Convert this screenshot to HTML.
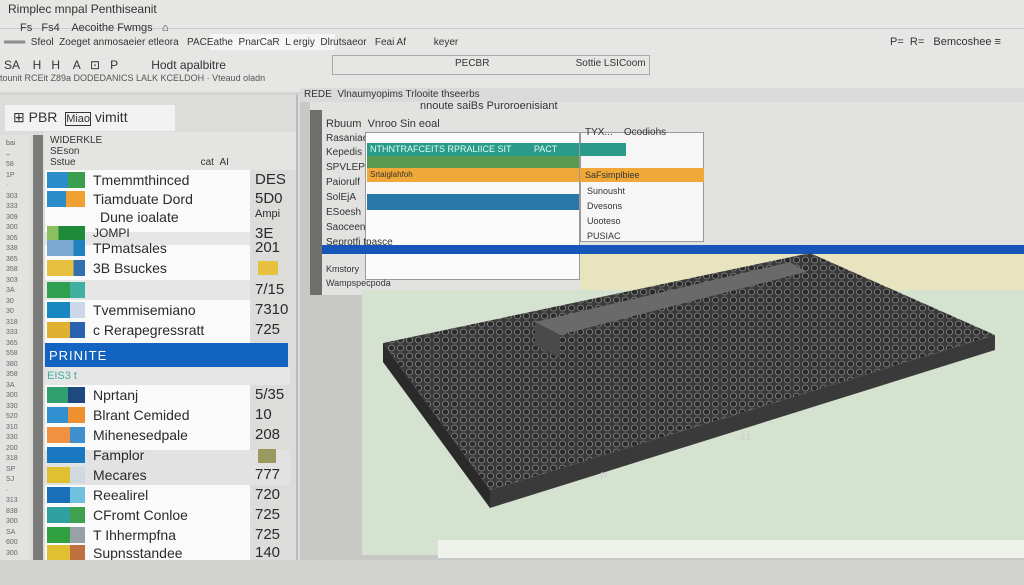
<!DOCTYPE html>
<html style="width:1024px;height:585px;overflow:hidden"><head><meta charset="utf-8"><style>
*{margin:0;padding:0;box-sizing:border-box}
body{width:1024px;height:585px;overflow:hidden;background:#d4d4d2;font-family:"Liberation Sans",sans-serif;position:relative;color:#333}
.a{position:absolute;white-space:nowrap}
.row{position:absolute;left:45px;width:245px;height:20px;font-size:14px;color:#2a2a2a}
.row .ic{position:absolute;left:2px;top:2px;width:38px;height:16px;background:linear-gradient(90deg,#2a8cc8 0 50%,#f0a030 50%)}
.row .t{position:absolute;left:48px;top:2px}
.row .v{position:absolute;left:210px;top:1px;font-size:15px}
</style></head><body>
<div class="a" style="left:0;top:0;width:1024px;height:92px;background:#e6e6e4"></div>
<div class="a" style="left:0;top:28px;width:1024px;height:1px;background:#ccc"></div>
<div class="a" style="left:8px;top:2px;font-size:12px">Rimplec mnpal Penthiseanit</div>
<div class="a" style="left:20px;top:22px;font-size:11px">Fs &nbsp; Fs4 &nbsp;&nbsp; Aecoithe Fwmgs &nbsp; ⌂</div>
<div class="a" style="left:210px;top:34px;width:125px;height:16px;background:#f5f5f5"></div>
<div class="a" style="left:4px;top:37px;font-size:10px">═══ &nbsp;Sfeol &nbsp;Zoeget anmosaeier etleora &nbsp; PACEathe &nbsp;PnarCaR &nbsp;L ergiy &nbsp;Dlrutsaeor &nbsp; Feai Af &nbsp;&nbsp;&nbsp;&nbsp;&nbsp;&nbsp;&nbsp;&nbsp; keyer</div>
<div class="a" style="left:4px;top:58px;font-size:12px">SA &nbsp;&nbsp; H &nbsp; H &nbsp;&nbsp; A &nbsp; ⊡ &nbsp; P &nbsp;&nbsp;&nbsp;&nbsp;&nbsp;&nbsp;&nbsp;&nbsp; Hodt apalbitre</div>
<div class="a" style="left:0;top:73px;font-size:9px;color:#555">tounit RCEit Z89a DODEDANICS LALK KCELDOH · Vteaud oladn</div>
<div class="a" style="left:332px;top:55px;width:318px;height:20px;border:1px solid #aaa"></div>
<div class="a" style="left:455px;top:58px;font-size:10px">PECBR &nbsp;&nbsp;&nbsp;&nbsp;&nbsp;&nbsp;&nbsp;&nbsp;&nbsp;&nbsp;&nbsp;&nbsp;&nbsp;&nbsp;&nbsp;&nbsp;&nbsp;&nbsp;&nbsp;&nbsp;&nbsp;&nbsp;&nbsp;&nbsp;&nbsp;&nbsp;&nbsp;&nbsp;&nbsp; Sottie LSICoom</div>
<div class="a" style="left:890px;top:36px;font-size:11px">P= &nbsp;R= &nbsp;&nbsp;Bemcoshee ≡</div>
<div class="a" style="left:0;top:95px;width:300px;height:465px;background:#dcdcda"></div>
<div class="a" style="left:5px;top:105px;width:170px;height:26px;background:#f2f2f2;font-size:14px;padding:4px 8px">⊞ PBR &nbsp;<span style="border:1px solid #333;font-size:11px">Miao</span> vimitt</div>
<div class="a" style="left:0;top:135px;width:30px;height:425px;overflow:hidden;background:#e2e2e0;font-size:7px;line-height:10.5px;color:#666;padding:4px 6px">bai<br>–<br>58<br>1P<br>·<br>303<br>333<br>309<br>300<br>305<br>338<br>365<br>358<br>303<br>3A<br>30<br>30<br>318<br>333<br>365<br>558<br>380<br>358<br>3A<br>300<br>330<br>520<br>310<br>330<br>200<br>318<br>SP<br>SJ<br>·<br>313<br>838<br>300<br>SA<br>600<br>300</div>
<div class="a" style="left:33px;top:135px;width:10px;height:425px;background:#7a7a78"></div>
<div class="a" style="left:44px;top:132px;width:252px;height:38px;background:#e4e4e2;font-size:10px;padding:3px 6px">WIDERKLE<br>SEson<br>Sstue &nbsp;&nbsp;&nbsp;&nbsp;&nbsp;&nbsp;&nbsp;&nbsp;&nbsp;&nbsp;&nbsp;&nbsp;&nbsp;&nbsp;&nbsp;&nbsp;&nbsp;&nbsp;&nbsp;&nbsp;&nbsp;&nbsp;&nbsp;&nbsp;&nbsp;&nbsp;&nbsp;&nbsp;&nbsp;&nbsp;&nbsp;&nbsp;&nbsp;&nbsp;&nbsp;&nbsp;&nbsp;&nbsp;&nbsp;&nbsp;&nbsp;&nbsp;&nbsp; cat &nbsp;AI</div>
<div class="a" style="left:45px;top:170px;width:205px;height:390px;background:#fafafa"></div>
<div class="a" style="left:45px;top:232px;width:205px;height:13px;background:#e6e6e6"></div>
<div class="a" style="left:45px;top:280px;width:205px;height:20px;background:#e6e6e6"></div>
<div class="a" style="left:45px;top:367px;width:245px;height:18px;background:#e6e6e6"></div>
<div class="a" style="left:45px;top:450px;width:245px;height:35px;background:#e2e2e2"></div>
<div class="row" style="top:170px"><div class="ic" style="background:linear-gradient(90deg,#2a8cc8 0 55%,#3aa050 55%)"></div><div class="t">Tmemmthinced</div><div class="v">DES</div></div>
<div class="row" style="top:189px"><div class="ic"></div><div class="t">Tiamduate Dord</div><div class="v">5D0</div></div>
<div class="row" style="top:207px"><div class="t" style="left:55px">Dune ioalate</div><div class="v" style="font-size:11px">Ampi</div></div>
<div class="row" style="top:224px"><div class="ic" style="background:linear-gradient(90deg,#8bc060 0 30%,#1e8a3a 30%)"></div><div class="t" style="font-size:12px">JOMPI</div><div class="v">3E</div></div>
<div class="row" style="top:238px"><div class="ic" style="background:linear-gradient(90deg,#7aa8d0 0 70%,#2080c0 70%)"></div><div class="t">TPmatsales</div><div class="v">201</div></div>
<div class="row" style="top:258px"><div class="ic" style="background:linear-gradient(90deg,#e8c040 0 70%,#3070b0 70%)"></div><div class="t">3B Bsuckes</div><div class="v" style="background:#e8c040;width:20px;height:14px;top:3px;left:213px"></div></div>
<div class="row" style="top:280px"><div class="ic" style="background:linear-gradient(90deg,#30a050 0 60%,#40b0a0 60%)"></div><div class="v">7/15</div></div>
<div class="row" style="top:300px"><div class="ic" style="background:linear-gradient(90deg,#1a88c0 0 60%,#ccd8e8 60%)"></div><div class="t">Tvemmisemiano</div><div class="v">7310</div></div>
<div class="row" style="top:320px"><div class="ic" style="background:linear-gradient(90deg,#e0b030 0 60%,#2a60b0 60%)"></div><div class="t">c Rerapegressratt</div><div class="v">725</div></div>
<div class="a" style="left:45px;top:343px;width:243px;height:24px;background:#1264c0;color:#fff;font-size:13px;padding:5px 4px;letter-spacing:1px">PRINITE</div>
<div class="a" style="left:47px;top:370px;font-size:11px;color:#4a9">EIS3 t</div>
<div class="row" style="top:385px"><div class="ic" style="background:linear-gradient(90deg,#30a070 0 55%,#204880 55%)"></div><div class="t">Nprtanj</div><div class="v">5/35</div></div>
<div class="row" style="top:405px"><div class="ic" style="background:linear-gradient(90deg,#3090d0 0 55%,#f09030 55%)"></div><div class="t">Blrant Cemided</div><div class="v">10</div></div>
<div class="row" style="top:425px"><div class="ic" style="background:linear-gradient(90deg,#f09040 0 60%,#4090d0 60%)"></div><div class="t">Mihenesedpale</div><div class="v">208</div></div>
<div class="row" style="top:445px"><div class="ic" style="background:#1a78c0"></div><div class="t">Famplor</div><div class="v" style="background:#9a9a60;width:18px;height:14px;top:4px;left:213px"></div></div>
<div class="row" style="top:465px"><div class="ic" style="background:linear-gradient(90deg,#e0c030 0 60%,#d0d8e0 60%)"></div><div class="t">Mecares</div><div class="v">777</div></div>
<div class="row" style="top:485px"><div class="ic" style="background:linear-gradient(90deg,#1a70b8 0 60%,#70c0e0 60%)"></div><div class="t">Reealirel</div><div class="v">720</div></div>
<div class="row" style="top:505px"><div class="ic" style="background:linear-gradient(90deg,#30a0a0 0 60%,#40a050 60%)"></div><div class="t">CFromt Conloe</div><div class="v">725</div></div>
<div class="row" style="top:525px"><div class="ic" style="background:linear-gradient(90deg,#30a040 0 60%,#9aa0a8 60%)"></div><div class="t">T Ihhermpfna</div><div class="v">725</div></div>
<div class="row" style="top:543px"><div class="ic" style="background:linear-gradient(90deg,#e0c030 0 60%,#c07040 60%)"></div><div class="t">Supnsstandee</div><div class="v">140</div></div>
<div class="a" style="left:296px;top:95px;width:2px;height:465px;background:#bbb"></div>
<div class="a" style="left:300px;top:88px;width:724px;height:472px;background:#c8c8c6"></div>
<div class="a" style="left:300px;top:88px;width:724px;height:14px;background:#dadada;font-size:10px;padding:1px 4px">REDE &nbsp;Vlnaumyopims Trlooite thseerbs</div>
<div class="a" style="left:310px;top:102px;width:714px;height:193px;background:#e2e2e0"></div>
<div class="a" style="left:310px;top:110px;width:12px;height:185px;background:#6e6e6c"></div>
<div class="a" style="left:420px;top:100px;font-size:11px">nnoute saiBs Puroroenisiant</div>
<div class="a" style="left:326px;top:118px;font-size:11px">Rbuum &nbsp;Vnroo Sin eoal</div>
<div class="a" style="left:326px;top:133px;font-size:10px">Rasaniaes</div>
<div class="a" style="left:365px;top:132px;width:215px;height:148px;background:#fbfbfb;border:1px solid #999"></div>
<div class="a" style="left:580px;top:132px;width:124px;height:110px;background:#f6f6f6;border:1px solid #999"></div>
<div class="a" style="left:585px;top:127px;font-size:10px">TYX... &nbsp;&nbsp; Ocodiohs</div>
<div class="a" style="left:367px;top:143px;width:212px;height:13px;background:#2a9a8a;color:#e0fff0;font-size:9px;padding:1px 3px">NTHNTRAFCEITS RPRALIICE SIT &nbsp;&nbsp;&nbsp;&nbsp;&nbsp;&nbsp;&nbsp; PACT</div>
<div class="a" style="left:580px;top:143px;width:46px;height:13px;background:#2a9a8a"></div>
<div class="a" style="left:367px;top:156px;width:212px;height:12px;background:#5a9a50"></div>
<div class="a" style="left:367px;top:168px;width:212px;height:14px;background:#f0a838;font-size:8px;padding:2px 3px">Srtaiglahfoh</div>
<div class="a" style="left:580px;top:168px;width:124px;height:14px;background:#f0a838;font-size:9px;padding:2px 5px">SaFsimplbiee</div>
<div class="a" style="left:367px;top:182px;width:212px;height:12px;background:#f8f8f8"></div>
<div class="a" style="left:367px;top:194px;width:212px;height:16px;background:#2878a8"></div>
<div class="a" style="left:587px;top:184px;font-size:9px;line-height:15px">Sunousht<br>Dvesons<br>Uooteso<br>PUSIAC</div>
<div class="a" style="left:326px;top:145px;font-size:10px;line-height:15px">Kepedis<br>SPVLEP<br>Paiorulf<br>SolEjA<br>ESoesh<br>Saoceen<br>Seprotfi tpasce</div>
<div class="a" style="left:322px;top:245px;width:702px;height:9px;background:#1556b8"></div>
<div class="a" style="left:580px;top:254px;width:444px;height:36px;background:#e8e4c0"></div>
<div class="a" style="left:326px;top:262px;font-size:9px;line-height:14px">Kmstory<br>Wampspecpoda</div>
<div class="a" style="left:362px;top:290px;width:662px;height:265px;background:#d6e2d0"></div>
<div class="a" style="left:438px;top:540px;width:586px;height:18px;background:#eef2ea"></div>
<svg class="a" style="left:0;top:0" width="1024" height="585">
<defs><pattern id="p" width="9" height="8" patternUnits="userSpaceOnUse"><rect width="9" height="8" fill="#3a3a3a"/><circle cx="4.5" cy="4" r="3" fill="#2a2a2a" stroke="#8a8a8a" stroke-width="0.8"/></pattern></defs>
<polygon points="383,343 810,253 995,335 490,490" fill="url(#p)"/>
<polygon points="383,343 490,490 490,508 383,362" fill="#2a2a2a"/>
<polygon points="490,490 995,335 995,350 490,508" fill="#3a3a3a"/>
<polygon points="535,322 790,262 806,272 560,335" fill="#6a6a6a"/>
<polygon points="560,335 806,272 806,298 560,358" fill="url(#p)"/>
<polygon points="535,322 560,335 560,358 535,345" fill="#4a4a4a"/>
<text x="600" y="480" font-size="11" fill="#ccc" font-family="Liberation Sans">P</text>
<text x="740" y="440" font-size="10" fill="#ccc" font-family="Liberation Sans">21</text>
</svg>
<div class="a" style="left:0;top:560px;width:1024px;height:25px;background:#d2d2d0"></div>
</body></html>
